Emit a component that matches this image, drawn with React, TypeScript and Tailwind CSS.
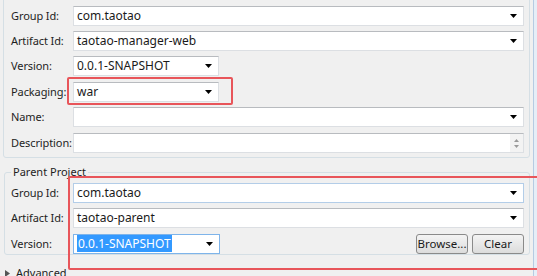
import React from "react";

const font = { fontFamily: '"Noto Sans", "Open Sans", Arial, sans-serif' };

function Arrow() {
    return (
        <svg width="7" height="4" viewBox="0 0 7 4" className="shrink-0">
            <path d="M0 0h7L3.5 4z" fill="#000" />
        </svg>
    );
}

type BoxProps = {
    value?: string;
    width?: string;
    combo?: boolean;
    focus?: "hover" | "active";
    selected?: boolean;
};

function Box({ value = "", width = "w-[451px]", combo = true, focus, selected }: BoxProps) {
    const border =
        focus === "active"
            ? "border-[#7eb4ea]"
            : focus === "hover"
            ? "border-[#b3cde8]"
            : "border-[#dcdfe3] border-t-[#b8bbbf]";
    return (
        <div className={`${width} h-5 bg-white border ${border} flex items-center pl-[3px] pr-[6px]`}>
            <span className="flex-1 text-[12px] leading-[14px] text-[#1a1a1a] whitespace-nowrap">
                {selected ? <span className="bg-[#3399ff] text-white px-[1px]">{value}</span> : value}
            </span>
            {combo && <Arrow />}
        </div>
    );
}

function Row({ label, children, className = "" }: { label: string; children: React.ReactNode; className?: string }) {
    return (
        <div className={`flex items-center h-5 ${className}`}>
            <div className="w-[62px] text-[11px] tracking-[-0.1px] text-[#1e1e1e] whitespace-nowrap">{label}</div>
            {children}
        </div>
    );
}

function Button({ children }: { children: React.ReactNode }) {
    return (
        <div className="w-[52px] h-5 rounded-[3px] border border-[#8a8a8a] bg-gradient-to-b from-[#f4f4f4] to-[#dcdcdc] flex items-center justify-center text-[11.5px] text-[#1a1a1a]">
            {children}
        </div>
    );
}

export default function App() {
    return (
        <div className="relative w-[537px] h-[276px] bg-[#f0f0f0] overflow-hidden flex" style={font}>
            <div className="w-[533px] flex flex-col pl-[3px]">
                {/* project panel */}
                <div className="mt-[-3px] w-[527px] border border-[#d5dfe5] rounded-[3px] pl-[7px] pt-[8px] pb-[4px] flex flex-col">
                    <Row label="Group Id:">
                        <Box value="com.taotao" />
                    </Row>
                    <Row label="Artifact Id:" className="mt-[5px]">
                        <Box value="taotao-manager-web" />
                    </Row>
                    <Row label="Version:" className="mt-[5px]">
                        <Box value="0.0.1-SNAPSHOT" width="w-[146px]" />
                    </Row>
                    <Row label="Packaging:" className="mt-[6px]">
                        <Box value="war" width="w-[146px]" />
                    </Row>
                    <Row label="Name:" className="mt-[5px]">
                        <Box />
                    </Row>
                    <Row label="Description:" className="mt-[6px]">
                        <div className="w-[451px] h-5 bg-white border border-[#dcdfe3] border-t-[#b8bbbf] flex justify-end">
                            <div className="w-[13px] h-full bg-[#f3f3f3] flex flex-col items-center justify-center gap-[3px]">
                                <svg width="5" height="3" viewBox="0 0 5 3">
                                    <path d="M0 3h5L2.5 0z" fill="#9a9a9a" />
                                </svg>
                                <svg width="5" height="3" viewBox="0 0 5 3">
                                    <path d="M0 0h5L2.5 3z" fill="#9a9a9a" />
                                </svg>
                            </div>
                        </div>
                    </Row>
                </div>

                {/* parent project group */}
                <div className="relative mt-[14px] ml-[1px] w-[526px] h-[91px] border border-[#d5dfe5] rounded-[3px] pl-[6px] pt-[10px] flex flex-col">
                    <div className="absolute left-[6px] top-[-9px] px-[2px] bg-[#f0f0f0] text-[11px] text-[#1e1e1e] leading-[16px]">
                        Parent Project
                    </div>
                    <Row label="Group Id:">
                        <Box value="com.taotao" focus="hover" />
                    </Row>
                    <Row label="Artifact Id:" className="mt-[5px]">
                        <Box value="taotao-parent" />
                    </Row>
                    <Row label="Version:" className="mt-[6px]">
                        <Box value="0.0.1-SNAPSHOT" width="w-[147px]" focus="active" selected />
                        <div className="ml-auto mr-[5px] flex gap-[4px]">
                            <Button>Browse...</Button>
                            <Button>Clear</Button>
                        </div>
                    </Row>
                </div>

                <div className="mt-[10px] ml-[2px] flex items-center gap-[6px] text-[11px] text-[#1e1e1e] leading-[16px]">
                    <svg width="5" height="7" viewBox="0 0 5 7">
                        <path d="M0 0l5 3.5L0 7z" fill="#555" />
                    </svg>
                    Advanced
                </div>
            </div>
            <div className="w-[4px] h-full border-l border-[#b6cbe2] bg-[#e6eef7]" />

            {/* red annotation boxes */}
            <div className="absolute left-[67px] top-[77px] w-[166px] h-[28px] border-2 border-[#e8555a] rounded-[2px]" />
            <div className="absolute left-[68px] top-[176px] w-[480px] h-[94px] border-2 border-[#e8555a] rounded-[2px]" />
        </div>
    );
}
